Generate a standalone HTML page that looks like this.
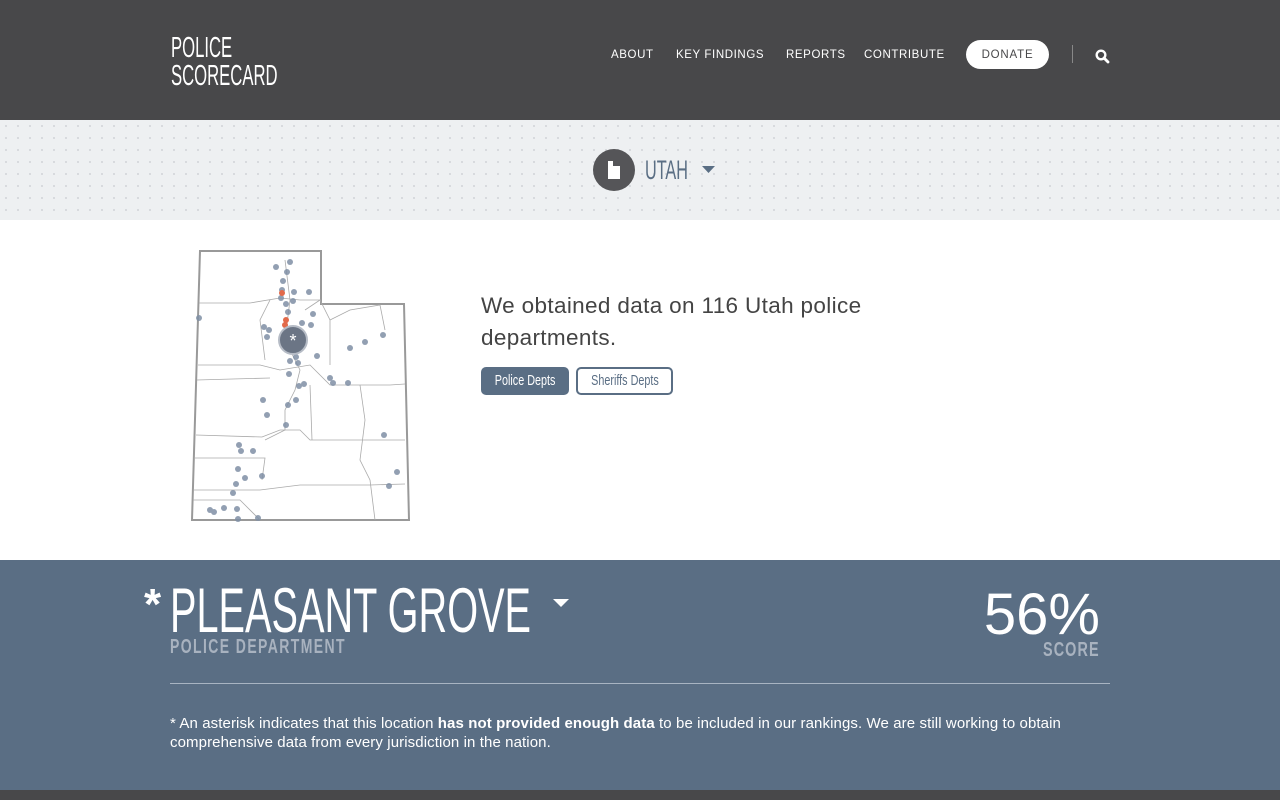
<!DOCTYPE html>
<html><head><meta charset="utf-8"><style>
*{margin:0;padding:0;box-sizing:border-box}
body{width:1280px;height:800px;overflow:hidden;font-family:"Liberation Sans",sans-serif;background:#fff;position:relative}
.abs{position:absolute}
.cond{display:inline-block;transform-origin:0 0;white-space:nowrap}
header{position:absolute;left:0;top:0;width:1280px;height:120px;background:#48484a}
.nav{position:absolute;top:49px;font-size:11.5px;letter-spacing:0.6px;color:#fff}
.band{position:absolute;left:0;top:120px;width:1280px;height:100px;background-color:#eef0f2;background-image:radial-gradient(circle,#d6d9dd 1px,transparent 1.3px);background-size:12px 12px}
.panel{position:absolute;left:0;top:560px;width:1280px;height:230px;background:#5a6e84}
.foot{position:absolute;left:0;top:790px;width:1280px;height:10px;background:#48484a}
.btn{position:absolute;height:28px;border-radius:5px;border:2px solid #5a6e84;font-size:15px;line-height:24px;text-align:center}
</style></head><body>
<header>
<div class="abs" style="left:171px;top:34px;color:#fff;font-size:29px;line-height:28px"><span class="cond" style="transform:scaleX(0.575)">POLICE<br>SCORECARD</span></div>
<div class="nav" style="left:611px">ABOUT</div>
<div class="nav" style="left:676px">KEY FINDINGS</div>
<div class="nav" style="left:786px">REPORTS</div>
<div class="nav" style="left:864px">CONTRIBUTE</div>
<div class="abs" style="left:966px;top:40px;width:83px;height:29px;background:#fff;border-radius:15px;color:#48484a;font-size:11.5px;letter-spacing:0.8px;line-height:30px;text-align:center">DONATE</div>
<div class="abs" style="left:1072px;top:45px;width:1px;height:18px;background:#888"></div>
<svg class="abs" style="left:1095px;top:49px" width="15" height="15" viewBox="0 0 15 15"><circle cx="6" cy="6" r="4.3" fill="none" stroke="#fff" stroke-width="2.4"/><line x1="9" y1="9" x2="13" y2="13" stroke="#fff" stroke-width="2.8" stroke-linecap="round"/></svg>
</header>
<div class="band">
<div class="abs" style="left:593px;top:29px;width:42px;height:42px;border-radius:50%;background:#555558"></div>
<svg class="abs" style="left:605px;top:40px" width="18" height="20" viewBox="0 0 18 20"><path d="M3 1h5v5h7v13H3z" fill="#fff"/></svg>
<div class="abs" style="left:645px;top:36px;color:#5a6e84;font-size:27px;line-height:28px"><span class="cond" style="transform:scaleX(0.6)">UTAH</span></div>
<svg class="abs" style="left:702px;top:46px" width="13" height="8"><path d="M0 0h13L6.5 7z" fill="#5a6e84"/></svg>
</div>
<svg class="abs" style="left:180px;top:240px" width="240" height="290" viewBox="180 240 240 290">
<g fill="none" stroke="#999" stroke-width="2"><path d="M200 251L321 251L321 304L404 304L409 520L192 520Z"/></g>
<g fill="none" stroke="#aaa" stroke-width="0.8">
<path d="M199 303L250 303L280 298L300 300L321 300"/><path d="M198 365L260 365L280 370L310 365L330 385L390 385L405 384"/>
<path d="M197 380L270 378"/><path d="M196 435L262 437L280 430L300 430L310 440L360 440L405 440"/>
<path d="M195 458L265 458L262 480"/><path d="M194 490L260 490L300 485L370 485L405 484"/>
<path d="M193 500L240 500L260 520"/><path d="M310 385L312 440"/><path d="M360 385L365 420L360 460L370 480L375 520"/>
<path d="M330 320L350 310L380 305L385 330"/><path d="M285 260L290 300L285 340L300 370L295 390L285 410L285 430L265 440"/>
<path d="M305 310L320 300L330 320L330 365"/><path d="M270 300L260 320L265 360"/>
</g>
<g fill="#7f8fa5" opacity="0.85">
<circle cx="276" cy="267" r="3"/><circle cx="290" cy="262" r="3"/><circle cx="287" cy="272" r="3"/><circle cx="283" cy="281" r="3"/><circle cx="282" cy="290" r="3"/><circle cx="281" cy="298" r="3"/><circle cx="286" cy="304" r="3"/><circle cx="293" cy="301" r="3"/><circle cx="294" cy="292" r="3"/><circle cx="309" cy="292" r="3"/><circle cx="288" cy="312" r="3"/><circle cx="199" cy="318" r="3"/><circle cx="313" cy="314" r="3"/><circle cx="264" cy="327" r="3"/><circle cx="269" cy="330" r="3"/><circle cx="267" cy="337" r="3"/><circle cx="302" cy="323" r="3"/><circle cx="311" cy="325" r="3"/><circle cx="383" cy="335" r="3"/><circle cx="350" cy="348" r="3"/><circle cx="365" cy="342" r="3"/><circle cx="290" cy="361" r="3"/><circle cx="296" cy="357" r="3"/><circle cx="317" cy="356" r="3"/><circle cx="298" cy="363" r="3"/><circle cx="289" cy="374" r="3"/><circle cx="330" cy="378" r="3"/><circle cx="333" cy="383" r="3"/><circle cx="348" cy="383" r="3"/><circle cx="299" cy="386" r="3"/><circle cx="304" cy="384" r="3"/><circle cx="288" cy="405" r="3"/><circle cx="296" cy="400" r="3"/><circle cx="263" cy="400" r="3"/><circle cx="267" cy="415" r="3"/><circle cx="286" cy="425" r="3"/><circle cx="384" cy="435" r="3"/><circle cx="239" cy="445" r="3"/><circle cx="241" cy="451" r="3"/><circle cx="253" cy="451" r="3"/><circle cx="238" cy="469" r="3"/><circle cx="245" cy="478" r="3"/><circle cx="262" cy="476" r="3"/><circle cx="397" cy="472" r="3"/><circle cx="389" cy="486" r="3"/><circle cx="236" cy="484" r="3"/><circle cx="233" cy="493" r="3"/><circle cx="210" cy="510" r="3"/><circle cx="214" cy="512" r="3"/><circle cx="224" cy="508" r="3"/><circle cx="237" cy="509" r="3"/><circle cx="238" cy="519" r="3"/><circle cx="258" cy="518" r="3"/>
</g>
<g fill="#e26a4a"><circle cx="282" cy="293" r="3"/><circle cx="286" cy="320" r="3"/><circle cx="285" cy="325" r="3"/></g>
<circle cx="293" cy="340" r="14" fill="#6b7585" stroke="#b6bcc6" stroke-width="2"/>
<text x="293" y="347" text-anchor="middle" fill="#fff" font-size="18" font-family="Liberation Sans">*</text>
</svg>
<div class="abs" style="left:481px;top:290px;width:430px;font-size:22.5px;letter-spacing:0.35px;line-height:32px;color:#444">We obtained data on 116 Utah police departments.</div>
<div class="btn" style="left:481px;top:367px;width:88px;background:#5a6e84;color:#fff"><span class="cond" style="transform:scaleX(0.72);transform-origin:50% 0">Police Depts</span></div>
<div class="btn" style="left:576px;top:367px;width:97px;background:#fff;color:#5a6e84"><span class="cond" style="transform:scaleX(0.72);transform-origin:50% 0">Sheriffs Depts</span></div>
<div class="panel">
<div class="abs" style="left:144px;top:20px;color:#fff;font-size:44px;font-weight:bold">*</div>
<div class="abs" style="left:170px;top:18px;color:#fff;font-size:63px;line-height:66px"><span class="cond" style="transform:scaleX(0.63)">PLEASANT GROVE</span></div>
<svg class="abs" style="left:553px;top:39px" width="16" height="9"><path d="M0 0h16L8 8z" fill="#fff"/></svg>
<div class="abs" style="left:170px;top:76px;color:#a8b2bf;font-size:20px;font-weight:bold;letter-spacing:2px"><span class="cond" style="transform:scaleX(0.7)">POLICE DEPARTMENT</span></div>
<div class="abs" style="left:960px;top:24px;width:140px;text-align:right;color:#fff;font-size:58px;line-height:62px">56%</div>
<div class="abs" style="left:1000px;top:79px;width:100px;text-align:right;color:#a8b2bf;font-size:20px;font-weight:bold;letter-spacing:1.5px"><span class="cond" style="transform:scaleX(0.72);transform-origin:100% 0">SCORE</span></div>
<div class="abs" style="left:170px;top:123px;width:940px;height:1px;background:#a8b4c2"></div>
<div class="abs" style="left:170px;top:154px;width:940px;color:#fff;font-size:15px;letter-spacing:0.1px;line-height:19px">* An asterisk indicates that this location <b>has not provided enough data</b> to be included in our rankings. We are still working to obtain comprehensive data from every jurisdiction in the nation.</div>
</div>
<div class="foot"></div>
</body></html>
